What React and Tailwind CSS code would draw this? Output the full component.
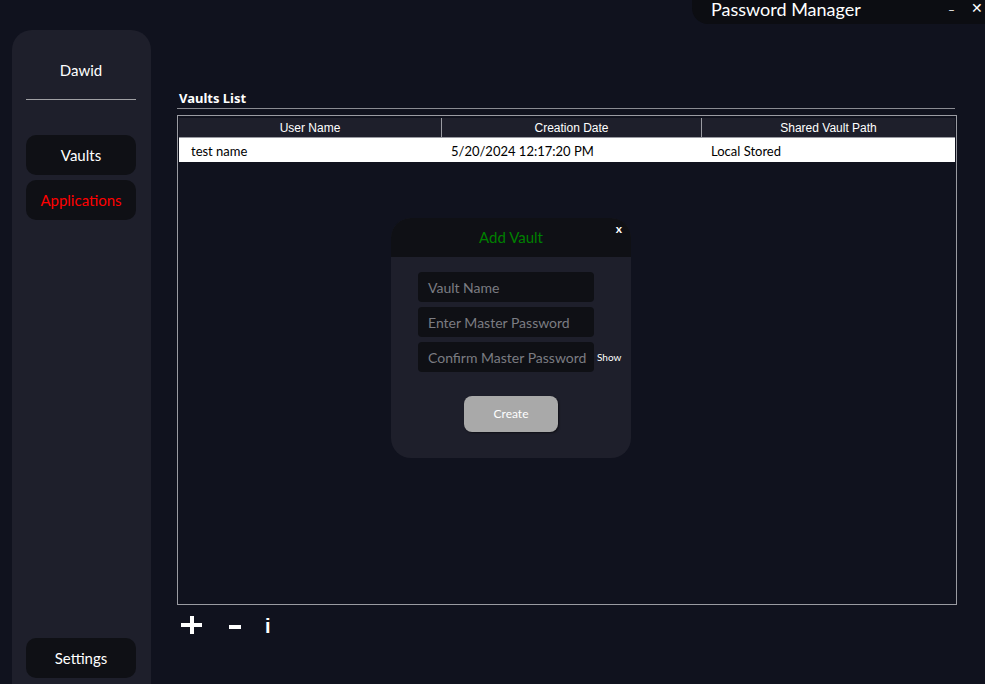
import React from 'react';

const rows = [
  { name: 'test name', date: '5/20/2024 12:17:20 PM', path: 'Local Stored' },
];

const SideButton = ({ label, active }) => (
  <button
    className={`w-[110px] h-[40px] rounded-[10px] bg-[#0f1015] text-[15px] ${active ? 'text-[#ff0000]' : 'text-white'}`}
  >
    {label}
  </button>
);

const Field = ({ placeholder }) => (
  <div className="w-[176px] h-[30px] rounded-[4px] bg-[#0f1015] flex items-center pl-[10px] text-[14px] text-[#7b7c82] whitespace-nowrap overflow-hidden">
    {placeholder}
  </div>
);

const App = () => {
  return (
    <div
      className="relative w-[985px] h-[684px] overflow-hidden bg-[#10121e] flex"
      style={{ fontFamily: 'Lato, "Noto Sans", sans-serif' }}
    >
      {/* window title bar */}
      <div className="absolute top-0 right-0 w-[293px] h-[24px] bg-[#0c0d12] rounded-bl-[16px] flex items-start">
        <span className="ml-[19px] -mt-[3px] text-[18px] text-white leading-[24px]">Password Manager</span>
        <span className="ml-auto mr-[16px] mt-[2px] text-[12px] text-white leading-[16px]">–</span>
        <span className="mr-[2px] mt-[0px] text-[14px] text-white leading-[16px]">✕</span>
      </div>

      {/* Sidebar */}
      <div className="ml-[12px] mt-[30px] w-[139px] h-[680px] rounded-[20px] bg-[#1e1f2b] flex flex-col items-start pl-[14px]">
        <div className="mt-[30px] w-[110px] text-center text-[15px] text-white leading-[20px]">Dawid</div>
        <div className="mt-[19px] w-[110px] h-px bg-[#a0a0a4]" />
        <div className="mt-[35px] flex flex-col gap-[5px]">
          <SideButton label="Vaults" />
          <SideButton label="Applications" active />
        </div>
        <div className="mt-auto mb-[32px]">
          <SideButton label="Settings" />
        </div>
      </div>

      {/* Main */}
      <div className="ml-[26px] pt-[90px] w-[780px] flex flex-col">
        <div className="pl-[2px] text-[13px] font-bold text-white leading-[16px]" style={{ fontFamily: '"Noto Sans", sans-serif' }}>
          Vaults List
        </div>
        <div className="mt-[2px] mr-[2px] h-px bg-[#8a8b92]" />
        <div className="mt-[6px] h-[490px] border border-[#9a9ba2] px-px pt-[2px]">
          <div className="grid grid-cols-[263px_260px_1fr] h-[20px] bg-[#1e1f2b] border-b border-[#9a9ba2] text-[12px] text-white" style={{ fontFamily: '"Liberation Sans", Arial, sans-serif' }}>
            <div className="border-r border-[#9a9ba2] flex items-center justify-center">User Name</div>
            <div className="border-r border-[#9a9ba2] flex items-center justify-center">Creation Date</div>
            <div className="flex items-center justify-center">Shared Vault Path</div>
          </div>
          {rows.map((r) => (
            <div key={r.name} className="grid grid-cols-[263px_260px_1fr] h-[24px] pt-[4px] bg-white text-[13px] text-black items-center">
              <div className="pl-[12px]">{r.name}</div>
              <div className="pl-[9px]">{r.date}</div>
              <div className="pl-[9px]">{r.path}</div>
            </div>
          ))}
        </div>
        {/* toolbar: add / remove / info */}
        <div className="mt-[14px] h-[16px] flex items-center">
          <div className="ml-[4px] relative w-[21px] h-[16px]">
            <div className="absolute left-0 top-[4px] w-[21px] h-[4px] bg-white" />
            <div className="absolute left-[9px] top-[-3px] w-[4px] h-[18px] bg-white" />
          </div>
          <div className="ml-[27px] w-[12px] h-[4px] bg-white" />
          <span className="ml-[24px] -mt-[3px] text-[20px] font-bold text-white leading-[16px]" style={{ fontFamily: '"Liberation Sans", Arial, sans-serif' }}>i</span>
        </div>
      </div>

      {/* Add Vault modal */}
      <div className="absolute left-[391px] top-[218px] w-[240px] h-[240px] rounded-[20px] bg-[#1e1f2b] overflow-hidden flex flex-col">
        <div className="relative h-[39px] bg-[#0f1015] flex items-center justify-center">
          <span className="text-[15px] text-[#008000]">Add Vault</span>
          <span className="absolute right-[9px] top-[2px] text-[12px] font-bold text-white">x</span>
        </div>
        <div className="mt-[15px] ml-[27px] flex flex-col gap-[5px]">
          <Field placeholder="Vault Name" />
          <Field placeholder="Enter Master Password" />
          <div className="flex items-center">
            <Field placeholder="Confirm Master Password" />
            <span className="ml-[3px] text-[10px] text-white">Show</span>
          </div>
        </div>
        <div className="mt-[24px] flex justify-center">
          <button className="w-[94px] h-[36px] rounded-[8px] bg-[#a9a9a9] text-[12px] text-white shadow-[1px_1px_2px_rgba(0,0,0,0.5)]">
            Create
          </button>
        </div>
      </div>
    </div>
  );
};

export default App;
